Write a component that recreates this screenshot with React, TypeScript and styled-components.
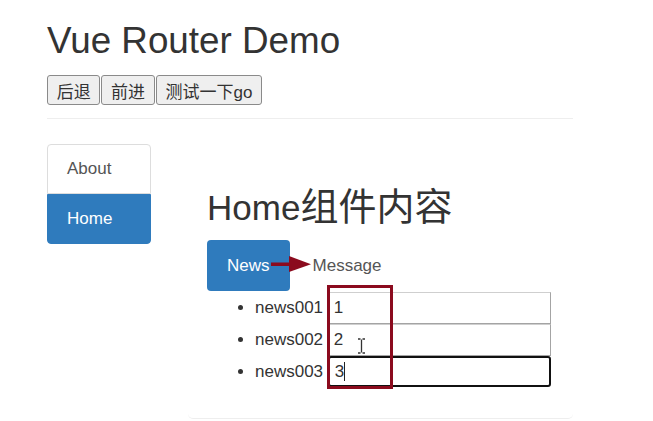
import styled, { createGlobalStyle } from 'styled-components';

const GlobalStyle = createGlobalStyle`
  body {
    margin: 0;
    background: #fff;
    color: #333;
    font-family: "Liberation Sans", "Noto Sans CJK SC", sans-serif;
  }
`;

const BLUE = '#2f7bbd';
const MARK = '#8b0b1e';

const newsList = [
  { id: 'news001', value: '1' },
  { id: 'news002', value: '2' },
  { id: 'news003', value: '3', focused: true },
];

const App = () => {
  return (
    <>
      <GlobalStyle />
      <Page>
        <Title>Vue Router Demo</Title>
        <ButtonRow>
          <HistoryButton>后退</HistoryButton>
          <HistoryButton>前进</HistoryButton>
          <HistoryButton>测试一下go</HistoryButton>
        </ButtonRow>
        <Divider />
        <Body>
          <SideNav>
            <SideItem>About</SideItem>
            <SideItem $active>Home</SideItem>
          </SideNav>
          <Panel>
            <Heading>
              Home<Cjk>组件内容</Cjk>
            </Heading>
            <Pills>
              <Pill $active>News</Pill>
              <Pill>Message</Pill>
              <Arrow width="42" height="18" viewBox="0 0 42 18">
                <rect x="0" y="7.5" width="22" height="3.5" fill={MARK} />
                <polygon points="18,1 40,9.2 18,17" fill={MARK} />
              </Arrow>
            </Pills>
            <ListWrap>
              <NewsList>
                {newsList.map((n) => (
                  <NewsItem key={n.id}>
                    {n.id}{' '}
                    <NewsInput readOnly value={n.value} $focused={n.focused} />
                  </NewsItem>
                ))}
              </NewsList>
              <Highlight />
              <Caret />
              <IBeam width="9" height="16" viewBox="0 0 9 16">
                <path d="M1 1h2.5M5.5 1H8M4.5 1.5v13M1 15h2.5M5.5 15H8" stroke="#333" strokeWidth="1.3" fill="none" />
              </IBeam>
            </ListWrap>
          </Panel>
        </Body>
      </Page>
    </>
  );
};

export default App;

const Page = styled.div`
  width: 526px;
  padding: 21px 0 0 47px;
`;

const Title = styled.h1`
  margin: 0;
  font-size: 36.8px;
  font-weight: 400;
  line-height: 40px;
  color: #333;
`;

const ButtonRow = styled.div`
  display: flex;
  gap: 1px;
  margin-top: 14px;
`;

const HistoryButton = styled.button`
  height: 30px;
  padding: 0 8.7px;
  font-family: inherit;
  font-size: 17px;
  color: #333;
  background: #efefef;
  border: 1px solid #8a8a8a;
  border-radius: 3px;
`;

const Divider = styled.div`
  margin-top: 13px;
  height: 1px;
  background: #eee;
`;

const Body = styled.div`
  display: flex;
  gap: 37px;
  margin-top: 25px;
  align-items: flex-start;
`;

const SideNav = styled.div`
  width: 104px;
  display: flex;
  flex-direction: column;
`;

const SideItem = styled.div<{ $active?: boolean }>`
  height: 50px;
  box-sizing: border-box;
  padding: 0 19px;
  line-height: 48px;
  font-size: 17px;
  color: ${({ $active }) => ($active ? '#fff' : '#555')};
  background: ${({ $active }) => ($active ? BLUE : '#fff')};
  border: 1px solid ${({ $active }) => ($active ? BLUE : '#ddd')};
  border-radius: ${({ $active }) => ($active ? '0 0 4px 4px' : '4px 4px 0 0')};
`;

const Panel = styled.div`
  width: 385px;
  box-sizing: border-box;
  padding: 20px 19px 20px;
  border-bottom: 1px solid #eee;
  border-radius: 0 0 5px 5px;
`;

const Heading = styled.h2`
  margin: 24px 0 13px;
  font-size: 35px;
  font-weight: 400;
  line-height: 38px;
  color: #333;
`;

const Cjk = styled.span`
  font-size: 38px;
`;

const Pills = styled.div`
  position: relative;
  display: flex;
  gap: 3px;
`;

const Pill = styled.div<{ $active?: boolean }>`
  height: 51px;
  line-height: 51px;
  padding: 0 20px;
  font-size: 17px;
  border-radius: 4px;
  color: ${({ $active }) => ($active ? '#fff' : '#555')};
  background: ${({ $active }) => ($active ? BLUE : 'transparent')};
`;

const Arrow = styled.svg`
  position: absolute;
  left: 64px;
  top: 15px;
`;

const ListWrap = styled.div`
  position: relative;
  margin-top: 1px;
`;

const NewsList = styled.ul`
  margin: 0 0 10px;
  padding-left: 48px;
`;

const NewsItem = styled.li`
  height: 32px;
  line-height: 32px;
  font-size: 17px;
  color: #333;
`;

const NewsInput = styled.input<{ $focused?: boolean }>`
  vertical-align: top;
  width: 223px;
  height: ${({ $focused }) => ($focused ? '31px' : '32px')};
  box-sizing: border-box;
  padding: 0 5px;
  font-family: inherit;
  font-size: 17px;
  color: #333;
  background: #fff;
  outline: none;
  border: ${({ $focused }) => ($focused ? '2px solid #111' : '1px solid #a4a4a4')};
  border-top-color: ${({ $focused }) => ($focused ? '#111' : '#cfcfcf')};
  border-radius: ${({ $focused }) => ($focused ? '3px' : '0')};
`;

const Highlight = styled.div`
  position: absolute;
  left: 120px;
  top: -7px;
  width: 66px;
  height: 104px;
  box-sizing: border-box;
  border: 3px solid ${MARK};
`;

const Caret = styled.div`
  position: absolute;
  left: 137px;
  top: 70px;
  width: 1px;
  height: 19px;
  background: #222;
`;

const IBeam = styled.svg`
  position: absolute;
  left: 150px;
  top: 46px;
`;
